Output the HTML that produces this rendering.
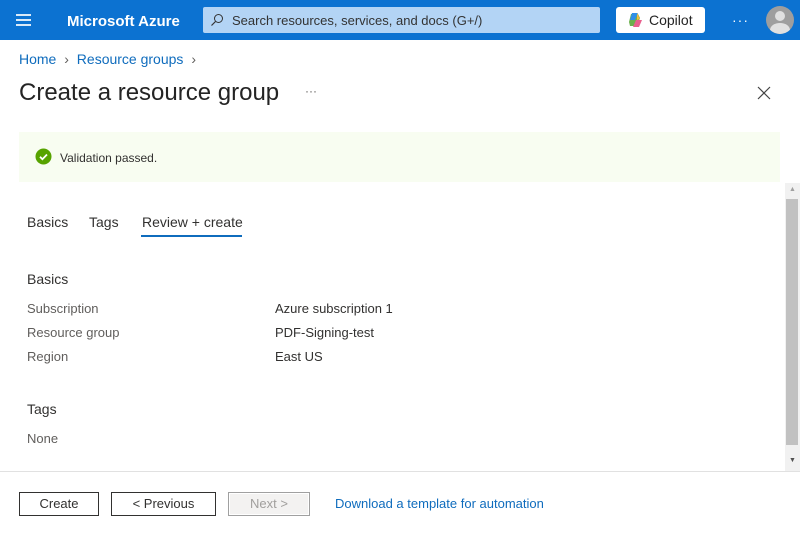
<!DOCTYPE html>
<html><head><meta charset="utf-8"><style>
*{box-sizing:border-box;margin:0;padding:0}
body{width:800px;height:536px;overflow:hidden;background:#fff;font-family:"Liberation Sans",sans-serif;color:#323130;position:relative}
.top{position:absolute;left:0;top:0;width:800px;height:40px;background:#0c72d1}
.abs{position:absolute}
.t13{font-size:13px}
.lbl{color:#605e5c;font-size:13px}
.btn{position:absolute;top:492px;height:24px;border:1px solid #323130;font-size:13px;text-align:center;line-height:22px;background:#fff}
</style></head><body>
<div class="top">
  <div class="abs" style="left:16px;top:14px;width:15px;height:2px;background:#fff;box-shadow:0 5px 0 #fff,0 10px 0 #fff;opacity:.85"></div>
  <div class="abs" style="left:67px;top:13px;color:#fff;font-size:15px;font-weight:bold">Microsoft Azure</div>
  <div class="abs" style="left:203px;top:7px;width:397px;height:26px;background:#b3d4f5;border-radius:2px"></div>
  <svg class="abs" style="left:210px;top:13px" width="14" height="14"><circle cx="8.5" cy="5.5" r="4" fill="none" stroke="#333" stroke-width="1"/><path d="M5.5 8.5L1.5 12.5" stroke="#333" stroke-width="1.2"/></svg>
  <div class="abs" style="left:232px;top:13px;font-size:13px;color:#333">Search resources, services, and docs (G+/)</div>
  <div class="abs" style="left:616px;top:7px;width:89px;height:26px;background:#fff;border-radius:3px"></div>
  <svg class="abs" style="left:628px;top:12px" width="15" height="16"><path d="M3 2h7l2 4-3 8H2L1 10z" fill="#6ab04c"/><path d="M4 1h6l-3 7H2z" fill="#2f8fe8"/><path d="M8 8h6l-3 7H5z" fill="#e8608d"/><path d="M9 1l3 6-3 1z" fill="#f6b73c"/></svg>
  <div class="abs" style="left:649px;top:12px;font-size:14px;color:#242424">Copilot</div>
  <div class="abs" style="left:732px;top:12px;color:#fff;font-size:14px;letter-spacing:1px">···</div>
  <div class="abs" style="left:766px;top:6px;width:28px;height:28px;border-radius:50%;background:#9e9e9e;overflow:hidden">
    <div class="abs" style="left:9px;top:5px;width:10px;height:10px;border-radius:50%;background:#e0e0e0"></div>
    <div class="abs" style="left:4px;top:17px;width:20px;height:14px;border-radius:50%;background:#e0e0e0"></div>
  </div>
</div>
<div class="abs t13" style="left:19px;top:51px;font-size:14px;color:#0f6cbd">Home <span style="color:#605e5c;margin:0 4px">›</span> Resource groups <span style="color:#605e5c;margin-left:4px">›</span></div>
<div class="abs" style="left:19px;top:79px;font-size:24px;color:#242424">Create a resource group</div>
<div class="abs" style="left:305px;top:84px;font-size:12px;color:#605e5c">···</div>
<svg class="abs" style="left:757px;top:86px" width="14" height="14"><path d="M1 1L13 13M13 1L1 13" stroke="#444" stroke-width="1.2"/></svg>
<div class="abs" style="left:19px;top:132px;width:761px;height:50px;background:#f8fdf1"></div>
<svg class="abs" style="left:35px;top:148px" width="17" height="17"><circle cx="8.5" cy="8.5" r="8" fill="#57a300"/><path d="M5 8.8l2.4 2.4L12 6.5" stroke="#fff" stroke-width="1.8" fill="none"/></svg>
<div class="abs" style="left:60px;top:151px;font-size:12px;color:#323130">Validation passed.</div>
<div class="abs" style="left:785px;top:183px;width:15px;height:288px;background:#f1f1f1"></div>
<div class="abs" style="left:786px;top:199px;width:12px;height:246px;background:#c1c1c1"></div>
<div class="abs" style="left:789px;top:186px;font-size:7px;color:#a0a0a0">▲</div>
<div class="abs" style="left:789px;top:457px;font-size:7px;color:#505050">▼</div>
<div class="abs" style="left:27px;top:214px;font-size:14px">Basics</div>
<div class="abs" style="left:89px;top:214px;font-size:14px">Tags</div>
<div class="abs" style="left:142px;top:214px;font-size:14px">Review + create</div>
<div class="abs" style="left:141px;top:235px;width:101px;height:2px;background:#0f6cbd"></div>
<div class="abs" style="left:27px;top:271px;font-size:14px">Basics</div>
<div class="abs lbl" style="left:27px;top:301px">Subscription</div>
<div class="abs lbl" style="left:27px;top:325px">Resource group</div>
<div class="abs lbl" style="left:27px;top:349px">Region</div>
<div class="abs t13" style="left:275px;top:301px">Azure subscription 1</div>
<div class="abs t13" style="left:275px;top:325px">PDF-Signing-test</div>
<div class="abs t13" style="left:275px;top:349px">East US</div>
<div class="abs" style="left:27px;top:401px;font-size:14px">Tags</div>
<div class="abs lbl" style="left:27px;top:431px">None</div>
<div class="abs" style="left:0;top:471px;width:800px;height:1px;background:#e1e1e1"></div>
<div class="btn" style="left:19px;width:80px">Create</div>
<div class="btn" style="left:111px;width:105px">&lt; Previous</div>
<div class="btn" style="left:228px;width:82px;border-color:#a0a0a0;background:#f3f2f1;color:#a19f9d;box-shadow:inset 0 0 0 1px #fff">Next &gt;</div>
<div class="abs t13" style="left:335px;top:496px;color:#0f6cbd">Download a template for automation</div>
</body></html>
